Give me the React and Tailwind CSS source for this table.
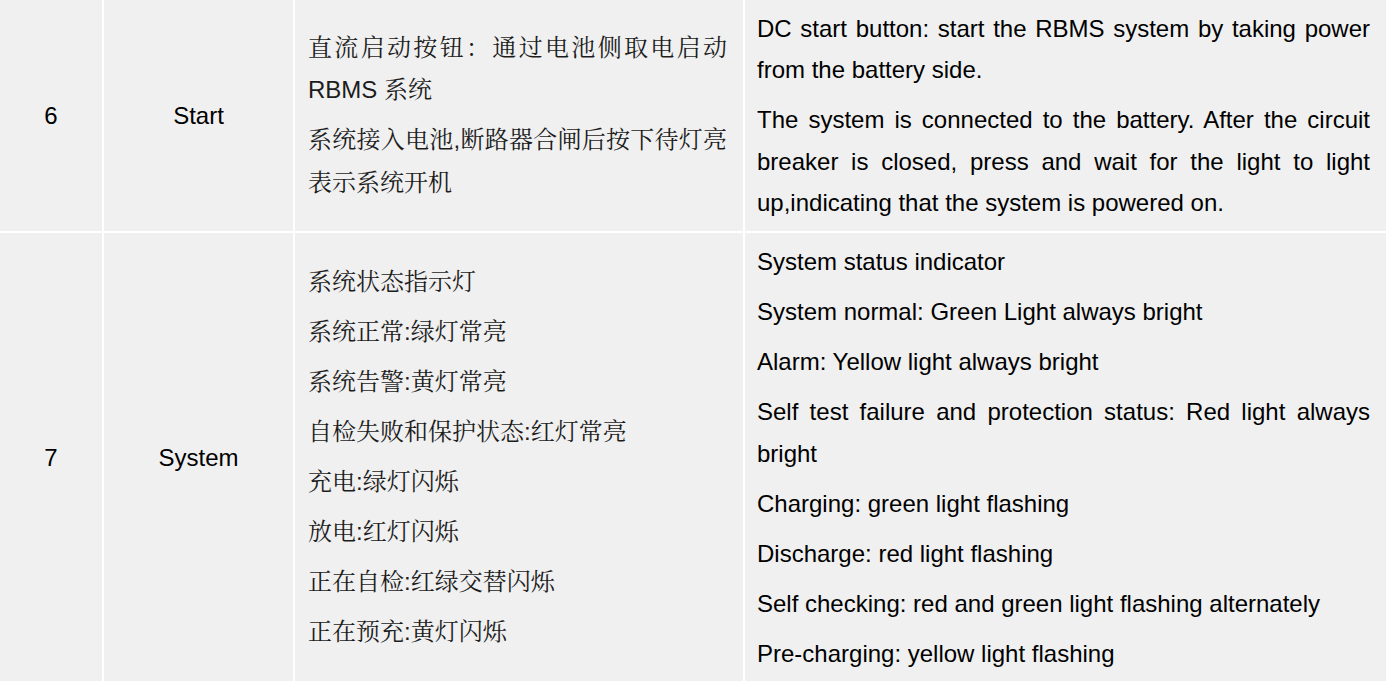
import React from 'react';

const rows = [
  {
    no: '6',
    name: 'Start',
    zh: ['直流启动按钮：通过电池侧取电启动RBMS 系统', '系统接入电池,断路器合闸后按下待灯亮表示系统开机'],
    en: [
      'DC start button: start the RBMS system by taking power from the battery side.',
      'The system is connected to the battery. After the circuit breaker is closed, press and wait for the light to light up,indicating that the system is powered on.',
    ],
  },
  {
    no: '7',
    name: 'System',
    zh: [
      '系统状态指示灯',
      '系统正常:绿灯常亮',
      '系统告警:黄灯常亮',
      '自检失败和保护状态:红灯常亮',
      '充电:绿灯闪烁',
      '放电:红灯闪烁',
      '正在自检:红绿交替闪烁',
      '正在预充:黄灯闪烁',
    ],
    en: [
      'System status indicator',
      'System normal: Green Light always bright',
      'Alarm: Yellow light always bright',
      'Self test failure and protection status: Red light always bright',
      'Charging: green light flashing',
      'Discharge: red light flashing',
      'Self checking: red and green light flashing alternately',
      'Pre-charging: yellow light flashing',
    ],
  },
];

const sans = "font-['Liberation_Sans',Arial,sans-serif]";
const zhFont = "font-['Liberation_Sans','Noto_Serif_CJK_SC','Noto_Sans_CJK_SC',sans-serif]";

export default function App() {
  return (
    <div className="w-[1386px] h-[681px] overflow-hidden bg-white">
      <div className={`grid grid-cols-[102px_189px_448px_1fr] grid-rows-[231px_449px] gap-[2px] bg-white text-[24px] text-black ${sans}`}>
        {rows.map((r) => (
          <React.Fragment key={r.no}>
            <div className="bg-[#f0f0f0] flex items-center justify-center">{r.no}</div>
            <div className="bg-[#f0f0f0] flex items-center justify-center">{r.name}</div>
            <div className={`bg-[#f0f0f0] flex flex-col justify-center pl-[13px] pr-[16px] gap-[7.5px] text-[#1c1c1c] ${zhFont}`}>
              {r.zh.map((t, i) => (
                <p key={i} className="leading-[42.5px] text-justify">{t}</p>
              ))}
            </div>
            <div className="bg-[#f0f0f0] flex flex-col justify-center pl-[12px] pr-[16px] gap-[8.5px]">
              {r.en.map((t, i) => (
                <p key={i} className="leading-[41.5px] text-justify">{t}</p>
              ))}
            </div>
          </React.Fragment>
        ))}
      </div>
    </div>
  );
}
